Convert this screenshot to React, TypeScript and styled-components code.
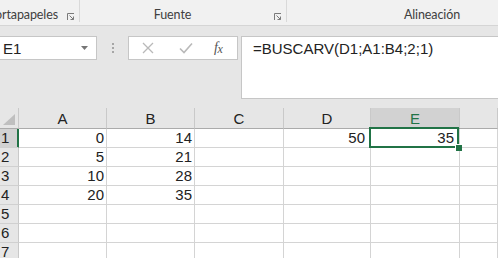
import React from "react";
import styled, { createGlobalStyle } from "styled-components";

const Global = createGlobalStyle`
  html, body { margin: 0; padding: 0; }
  body {
    width: 498px; height: 258px; overflow: hidden;
    background: #ffffff;
    font-family: "Liberation Sans", Arial, sans-serif;
  }
`;

const Page = styled.div`
  width: 498px;
  height: 258px;
  overflow: hidden;
  display: flex;
  flex-direction: column;
`;

/* ---------- Ribbon ---------- */
const Ribbon = styled.div`
  height: 25px;
  flex-shrink: 0;
  background: #f1f1f1;
  border-bottom: 1px solid #d5d5d5;
  display: flex;
  overflow: hidden;
`;

const Group = styled.div<{ $w: number; $align: "end" | "center" }>`
  width: ${(p) => p.$w}px;
  flex-shrink: 0;
  height: 22px;
  box-sizing: border-box;
  border-right: 1px solid #d9d9d9;
  display: flex;
  align-items: flex-end;
  justify-content: ${(p) => (p.$align === "end" ? "flex-end" : "center")};
  gap: 9px;
  padding-right: 4px;
  padding-bottom: 2px;
`;

const GroupLabel = styled.span<{ $grow?: boolean }>`
  font-family: Lato, "Noto Sans", sans-serif;
  font-size: 12.5px;
  line-height: 16px;
  margin-bottom: -3px;
  color: #404040;
  letter-spacing: -0.1px;
  white-space: nowrap;
  ${(p) => (p.$grow ? "flex: 1; text-align: center;" : "")}
`;

const LauncherIcon = styled.svg`
  flex-shrink: 0;
  margin-bottom: -1px;
`;

const Launcher = () => (
  <LauncherIcon width="8" height="8" viewBox="0 0 8 8">
    <path d="M0.5 7 V0.5 H7" fill="none" stroke="#7a7a7a" strokeWidth="1" />
    <path d="M2.5 2.5 L6.5 6.5 M3.5 6.5 H6.5 V3.5" fill="none" stroke="#7a7a7a" strokeWidth="1" />
  </LauncherIcon>
);

/* ---------- Formula bar ---------- */
const FormulaArea = styled.div`
  flex-shrink: 0;
  background: #e6e6e6;
  padding: 10px 0 9px 0;
  display: flex;
  align-items: flex-start;
`;

const NameBox = styled.div`
  width: 101px;
  height: 24px;
  margin-left: -4px;
  box-sizing: border-box;
  background: #ffffff;
  border: 1px solid #c6c6c6;
  display: flex;
  align-items: center;
  justify-content: space-between;
  padding: 0 7px 0 6px;
  font-size: 15px;
  color: #222222;
`;

const Dots = styled.div`
  width: 2px;
  height: 24px;
  margin: 0 14px 0 15px;
  display: flex;
  flex-direction: column;
  justify-content: center;
  gap: 2px;
  & > i {
    display: block;
    width: 2px;
    height: 2px;
    background: #a6a6a6;
  }
`;

const ButtonsBox = styled.div`
  width: 110px;
  height: 24px;
  box-sizing: border-box;
  background: #ffffff;
  border: 1px solid #c6c6c6;
  display: flex;
  align-items: center;
  padding-left: 13px;
`;

const IconSlot = styled.div<{ $w: number }>`
  width: ${(p) => p.$w}px;
  height: 22px;
  display: flex;
  align-items: center;
  justify-content: flex-start;
`;

const Fx = styled.span`
  font-family: "Liberation Serif", "Times New Roman", serif;
  font-style: italic;
  font-size: 14px;
  color: #555555;
  letter-spacing: -0.5px;
  & > sub {
    font-size: 12px;
    vertical-align: -1px;
  }
`;

const FormulaInput = styled.div`
  flex: 1;
  margin-left: 3px;
  margin-right: -4px;
  height: 63px;
  box-sizing: border-box;
  background: #ffffff;
  border: 1px solid #c6c6c6;
  padding: 3px 0 0 11px;
  font-size: 15px;
  line-height: 18px;
  color: #222222;
  white-space: nowrap;
`;

/* ---------- Sheet ---------- */
const Sheet = styled.div`
  display: grid;
  grid-template-columns: 19px 88px 88px 89px 87px 89px 1fr;
  grid-auto-rows: 19px;
  grid-template-rows: 21px;
  background: #ffffff;
  font-size: 15px;
  color: #222222;
`;

const ColHead = styled.div<{ $sel?: boolean }>`
  box-sizing: border-box;
  background: ${(p) => (p.$sel ? "#d2d2d2" : "#e6e6e6")};
  border-right: 1px solid #c9c9c9;
  border-bottom: 1px solid ${(p) => (p.$sel ? "#217346" : "#ababab")};
  color: ${(p) => (p.$sel ? "#217346" : "#222222")};
  display: flex;
  align-items: center;
  justify-content: center;
  padding-top: 2px;
  line-height: 18px;
`;

const Corner = styled(ColHead)`
  display: flex;
  align-items: flex-end;
  justify-content: flex-end;
  padding: 0 3px 3px 0;
`;

const RowHead = styled.div<{ $sel?: boolean }>`
  box-sizing: border-box;
  background: ${(p) => (p.$sel ? "#d2d2d2" : "#e6e6e6")};
  border-right: 1px solid ${(p) => (p.$sel ? "#217346" : "#c9c9c9")};
  border-bottom: 1px solid #d0d0d0;
  ${(p) => (p.$sel ? "box-shadow: inset -1px 0 0 #217346;" : "")}
  line-height: 18px;
  padding-left: 1px;
  color: #222222;
`;

const Cell = styled.div<{ $pad?: number }>`
  position: relative;
  box-sizing: border-box;
  border-right: 1px solid #d4d4d4;
  border-bottom: 1px solid #d4d4d4;
  line-height: 18px;
  text-align: right;
  padding-right: ${(p) => p.$pad ?? 2}px;
  white-space: nowrap;
`;

const Selection = styled.div`
  position: absolute;
  z-index: 2;
  left: -2px;
  top: -2px;
  right: 0;
  bottom: -1px;
  border: 2px solid #217346;
  pointer-events: none;
`;

const FillHandle = styled.div`
  position: absolute;
  right: -5px;
  bottom: -5px;
  width: 6px;
  height: 6px;
  background: #217346;
  border-left: 1px solid #ffffff;
  border-top: 1px solid #ffffff;
`;

const cols = ["A", "B", "C", "D", "E", ""];
const data: (string | number)[][] = [
  [0, 14, "", 50, 35, ""],
  [5, 21, "", "", "", ""],
  [10, 28, "", "", "", ""],
  [20, 35, "", "", "", ""],
  ["", "", "", "", "", ""],
  ["", "", "", "", "", ""],
  ["", "", "", "", "", ""],
];

export default function App() {
  return (
    <Page>
      <Global />
      <Ribbon>
        <Group $w={80} $align="end">
          <GroupLabel>Portapapeles</GroupLabel>
          <Launcher />
        </Group>
        <Group $w={207} $align="end">
          <GroupLabel $grow>Fuente</GroupLabel>
          <Launcher />
        </Group>
        <Group $w={295} $align="center">
          <GroupLabel>Alineación</GroupLabel>
        </Group>
      </Ribbon>

      <FormulaArea>
        <NameBox>
          <span>E1</span>
          <svg width="8" height="5" viewBox="0 0 8 5">
            <polygon points="0,0 7,0 3.5,4" fill="#767676" />
          </svg>
        </NameBox>
        <Dots>
          <i />
          <i />
          <i />
        </Dots>
        <ButtonsBox>
          <IconSlot $w={37}>
            <svg width="12" height="12" viewBox="0 0 12 12">
              <path d="M1 1 L11 11 M11 1 L1 11" stroke="#b9b9b9" strokeWidth="1.3" fill="none" />
            </svg>
          </IconSlot>
          <IconSlot $w={35}>
            <svg width="14" height="12" viewBox="0 0 14 12">
              <path d="M1 6.5 L5 10.5 L13 1.5" stroke="#b9b9b9" strokeWidth="1.6" fill="none" />
            </svg>
          </IconSlot>
          <IconSlot $w={20}>
            <Fx>
              f<sub>x</sub>
            </Fx>
          </IconSlot>
        </ButtonsBox>
        <FormulaInput>=BUSCARV(D1;A1:B4;2;1)</FormulaInput>
      </FormulaArea>

      <Sheet>
        <Corner>
          <svg width="12" height="11" viewBox="0 0 12 11">
            <polygon points="12,0 12,11 0,11" fill="#bfbfbf" />
          </svg>
        </Corner>
        {cols.map((c, i) => (
          <ColHead key={i} $sel={c === "E"}>
            {c}
          </ColHead>
        ))}
        {data.map((row, r) => (
          <React.Fragment key={r}>
            <RowHead $sel={r === 0}>{r + 1}</RowHead>
            {row.map((v, c) => (
              <Cell key={c} $pad={c >= 3 ? 5 : 2}>
                {v}
                {r === 0 && c === 4 && (
                  <Selection>
                    <FillHandle />
                  </Selection>
                )}
              </Cell>
            ))}
          </React.Fragment>
        ))}
      </Sheet>
    </Page>
  );
}
